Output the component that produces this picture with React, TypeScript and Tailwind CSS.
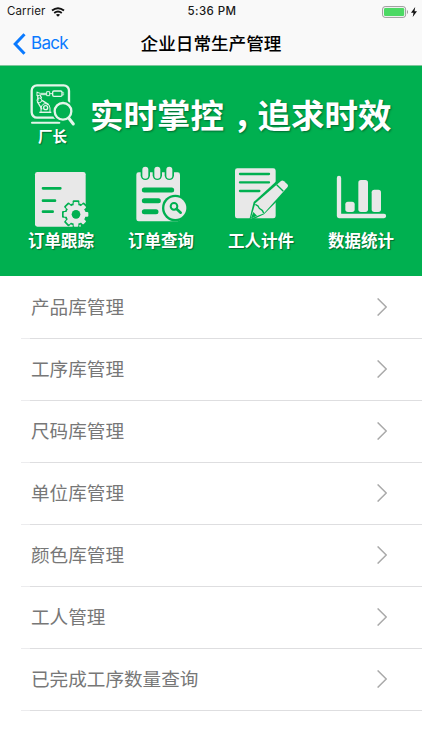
const MENU = [
  "产品库管理",
  "工序库管理",
  "尺码库管理",
  "单位库管理",
  "颜色库管理",
  "工人管理",
  "已完成工序数量查询",
];

const SHORTCUTS = [
  { label: "订单跟踪", icon: <TrackIcon /> },
  { label: "订单查询", icon: <SearchIcon /> },
  { label: "工人计件", icon: <PieceIcon /> },
  { label: "数据统计", icon: <StatsIcon /> },
];

function TrackIcon() {
  const teeth = [0, 45, 90, 135, 180, 225, 270, 315];
  return (
    <svg viewBox="24 12 198 186" className="w-[66px] h-[62px] overflow-visible">
      <rect x="45" y="36" width="152" height="164" rx="7" fill="#e8e8e8" />
      <path d="M69 85h52M69 122h36M69 155h29" stroke="#00b050" strokeWidth="8" strokeLinecap="round" />
      <g fill="#00b050">
        <circle cx="168" cy="163" r="34" />
        {teeth.map((a) => (
          <rect key={a} x="158" y="121" width="20" height="20" rx="3" transform={`rotate(${a} 168 163)`} />
        ))}
        <path d="M182 182h23v23h-23z" />
      </g>
      <g fill="#e8e8e8">
        <circle cx="168" cy="163" r="29" />
        {teeth.map((a) => (
          <rect key={a} x="161" y="126" width="14" height="14" rx="3" transform={`rotate(${a} 168 163)`} />
        ))}
      </g>
      <circle cx="168" cy="163" r="13" fill="#00b050" />
    </svg>
  );
}

function SearchIcon() {
  return (
    <svg viewBox="24 12 198 186" className="w-[66px] h-[62px] overflow-visible">
      <rect x="49" y="37" width="131" height="147" rx="7" fill="#e8e8e8" />
      {[76, 112, 148].map((x) => (
        <g key={x}>
          <rect x={x - 14} y="14" width="28" height="46" rx="14" fill="#00b050" />
          <rect x={x - 9} y="20" width="18" height="36" rx="9" fill="#e8e8e8" />
        </g>
      ))}
      <path d="M73 90h82M73 122h42M73 155h35" stroke="#00b050" strokeWidth="15" strokeLinecap="round" />
      <circle cx="166" cy="144" r="40" fill="#00b050" />
      <circle cx="166" cy="144" r="33" fill="#e8e8e8" />
      <circle cx="162" cy="139" r="10" fill="none" stroke="#00b050" strokeWidth="6" />
      <path d="M170 147l12 11" stroke="#00b050" strokeWidth="8" strokeLinecap="round" />
    </svg>
  );
}

function PieceIcon() {
  return (
    <svg viewBox="24 12 198 186" className="w-[66px] h-[62px] overflow-visible">
      <rect x="45" y="25" width="122" height="150" rx="7" fill="#e8e8e8" />
      <path d="M60 42h87M60 67h87M60 93h58" stroke="#00b050" strokeWidth="7" strokeLinecap="round" />
      <path d="M88 179l13-53 76-70 34 27-79 80-34 16z" fill="#00b050" />
      <path d="M92 176l14-46 77-67q4-3 9 1l10 9q4 4 0 9l-70 78z" fill="#e8e8e8" />
      <path d="M106 133q10 4 12 12q10 4 13 14M170 74l20 20" fill="none" stroke="#00b050" strokeWidth="4" />
      <path d="M92 176l8-20 11 11z" fill="#00b050" />
    </svg>
  );
}

function StatsIcon() {
  return (
    <svg viewBox="24 12 198 186" className="w-[66px] h-[62px] overflow-visible">
      <path d="M57 54v114h135" fill="none" stroke="#e8e8e8" strokeWidth="13" strokeLinecap="round" strokeLinejoin="round" />
      <g fill="#e8e8e8">
        <rect x="76" y="125" width="28" height="31" rx="8" />
        <rect x="115" y="60" width="29" height="96" rx="8" />
        <rect x="155" y="89" width="28" height="67" rx="8" />
      </g>
    </svg>
  );
}

// Robot arm on a monitor with a magnifier
function FactoryLogo() {
  return (
    <svg viewBox="27 21 141 132" className="w-[47px] h-11 overflow-visible" fill="none" stroke="#e4f5ea">
      <path d="M36 143h82" strokeWidth="6" strokeLinecap="round" />
      <rect x="35" y="31" width="112" height="97" rx="16" strokeWidth="7" />
      <path d="M51 50v13l11-4h18M51 52l10 3h19" strokeWidth="3" />
      <path d="M80 50h9v12h-9zM89 56h8" strokeWidth="3" />
      <rect x="98" y="48" width="28" height="16" rx="4" strokeWidth="4" />
      <path d="M126 52h5v8h-5" strokeWidth="2" />
      <path d="M53 60l1 17M60 60l5 10M52 80l14 23M66 76l20 13" strokeWidth="4" />
      <circle cx="58" cy="76" r="7" strokeWidth="3" />
      <path d="M63 112V99q3-14 15-13q12 1 12 13v13z" strokeWidth="3" />
      <circle cx="77" cy="98" r="6" strokeWidth="4" />
      <path d="M58 112h36" strokeWidth="4" />
      <circle cx="129" cy="109" r="33" fill="#00b050" stroke="none" />
      <path d="M146 128l15 20" stroke="#00b050" strokeWidth="14" />
      <circle cx="129" cy="109" r="25" strokeWidth="7" />
      <path d="M146 129l14 18" strokeWidth="9" strokeLinecap="round" />
    </svg>
  );
}

function StatusBar() {
  return (
    <div className="h-[23px] flex items-center justify-between pl-[7px] pr-[5px] text-[11.5px] leading-none text-[#1a1a1a]">
      <div className="flex-1 flex items-center gap-[6px]">
        <span className="tracking-[0.1px]">Carrier</span>
        <svg viewBox="0 0 14 10" className="w-[14px] h-[10px]" fill="none" stroke="#111">
          <path d="M1 3.6Q7 -1.2 13 3.6" strokeWidth="1.9" />
          <path d="M3.2 6Q7 3 10.8 6" strokeWidth="1.8" />
          <path d="M7 9.8L4.9 7.7Q7 6.2 9.1 7.7z" fill="#111" stroke="none" />
        </svg>
      </div>
      <span className="font-medium tracking-[0.4px]">5:36 PM</span>
      <div className="flex-1 flex items-center justify-end gap-[3px]">
        <svg viewBox="0 0 26 12" className="w-[26px] h-3">
          <rect x="0.6" y="0.6" width="23" height="10.8" rx="2.5" fill="none" stroke="#999" strokeWidth="1" />
          <rect x="2" y="2" width="20.2" height="8" rx="1.3" fill="#4cd964" />
          <path d="M25 4v4q1-.5 1-2t-1-2z" fill="#999" />
        </svg>
        <svg viewBox="0 0 6 10" className="w-[6px] h-[10px]">
          <path d="M4.2 0L0 5.7h2.5L1.7 10L6 4.2H3.5z" fill="#111" />
        </svg>
      </div>
    </div>
  );
}

export default function App() {
  return (
    <div className="w-[422px] h-[750px] overflow-hidden bg-white font-[Inter,'Noto_Sans_CJK_SC',sans-serif]">
      {/* Navigation */}
      <header className="h-[66px] bg-[#f9f9f9] border-b border-[#7fc69c]">
        <StatusBar />
        <div className="h-[41px] grid grid-cols-[1fr_auto_1fr] items-center">
          <button className="flex items-center gap-[5px] pl-[13px] text-[#0a7aff] text-[17px] leading-none tracking-[-0.7px]">
            <svg viewBox="0 0 13 22" className="w-[13px] h-[22px]" fill="none" stroke="#0a7aff" strokeWidth="3">
              <path d="M11.5 1.3L2.2 11l9.3 9.7" />
            </svg>
            Back
          </button>
          <h1 className="text-[17.6px] leading-none font-medium text-black">企业日常生产管理</h1>
        </div>
      </header>

      {/* Banner */}
      <section className="h-[210px] bg-[#00b050] text-white">
        <div className="h-[98px] flex pl-[29px] pt-4">
          <div className="w-[47px] flex flex-col items-center">
            <FactoryLogo />
            <span className="mt-[3px] text-[14.5px] leading-4 font-bold [text-shadow:1px_1px_1px_#006a30]">厂长</span>
          </div>
          <h2 className="ml-[14px] mt-[14px] h-10 flex text-[33.5px] leading-10 font-bold whitespace-nowrap [text-shadow:1px_1px_2px_#006a30]">
            <span>实时掌控</span>
            <span className="w-[33.5px] pl-[9px] [font-feature-settings:'halt']">，</span>
            <span>追求时效</span>
          </h2>
        </div>
        <div className="grid grid-cols-4 px-[11px]">
          {SHORTCUTS.map((item) => (
            <button key={item.label} className="flex flex-col items-center">
              {item.icon}
              <span className="mt-[5px] text-[16.5px] leading-5 font-bold [text-shadow:1px_1px_1px_#006a30]">{item.label}</span>
            </button>
          ))}
        </div>
      </section>

      {/* Menu */}
      <ul className="pt-px">
        {MENU.map((name) => (
          <li key={name} className="h-[62px] flex flex-col">
            <div className="flex-1 flex items-center justify-between pl-[31px] pr-[35px]">
              <span className="text-[18.6px] leading-none text-[#777]">{name}</span>
              <svg viewBox="0 0 10 18" className="w-[10px] h-[18px] mb-px" fill="none" stroke="#a9a9a9" strokeWidth="1.4">
                <path d="M.6 .4L9.2 9L.6 17.6" />
              </svg>
            </div>
            <div className="flex pl-[21px]">
              <div className="w-[9px] h-px bg-[#ececee]" />
              <div className="flex-1 h-px bg-[#dedee0]" />
            </div>
          </li>
        ))}
      </ul>
    </div>
  );
}
